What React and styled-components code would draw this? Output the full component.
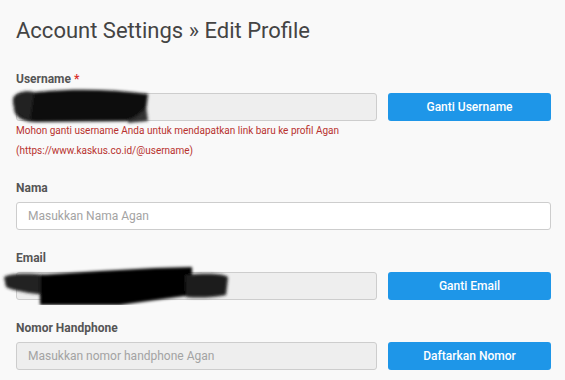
import React from 'react';
import styled, { createGlobalStyle } from 'styled-components';

const GlobalStyle = createGlobalStyle`
  html, body {
    margin: 0;
    padding: 0;
    background: #f9f9f9;
  }
  body {
    font-family: Roboto, "Liberation Sans", Arial, sans-serif;
  }
`;

const Page = styled.div`
  position: relative;
  width: 565px;
  height: 380px;
  overflow: hidden;
  box-sizing: border-box;
  padding: 16px 14px 0 16px;
  background: #f9f9f9;
`;

const Title = styled.h1`
  margin: 0 0 25px;
  font-size: 22px;
  line-height: 30px;
  font-weight: 400;
  color: #444;
`;

const Group = styled.div`
  margin-bottom: ${(p) => (p.$tight ? 19 : 20)}px;
`;

const Label = styled.label`
  display: block;
  font-size: 12px;
  line-height: 16px;
  font-weight: 700;
  color: #555;
  margin-bottom: 6px;
`;

const Required = styled.span`
  color: #d9302c;
  margin-left: 3px;
`;

const Row = styled.div`
  display: grid;
  grid-template-columns: ${(p) => (p.$withButton ? '1fr 163px' : '1fr')};
  column-gap: 11px;
`;

const Input = styled.input`
  box-sizing: border-box;
  width: 100%;
  height: 28px;
  margin: 0;
  padding: 0 11px;
  border: 1px solid #cdcdcd;
  border-radius: 3px;
  background: ${(p) => (p.disabled ? '#eeeeee' : '#ffffff')};
  font-family: inherit;
  font-size: 12px;
  color: #444;
  outline: none;
  &::placeholder {
    color: #a3a3a3;
  }
`;

const Button = styled.button`
  height: 28px;
  margin: 0;
  border: none;
  border-radius: 3px;
  background: #1e96e8;
  color: #fff;
  font-family: inherit;
  font-size: 12px;
  font-weight: 500;
  cursor: pointer;
`;

const Helper = styled.p`
  margin: 0;
  font-size: 10px;
  line-height: 20px;
  color: #b8322e;
`;

const Scribble = styled.svg`
  position: absolute;
  pointer-events: none;
`;

const UsernameScribble = () => (
  <Scribble width="160" height="50" viewBox="0 0 160 50" style={{ left: 0, top: 80 }}>
    <defs>
      <filter id="b1" x="-20%" y="-40%" width="140%" height="180%">
        <feGaussianBlur stdDeviation="1.6" />
      </filter>
    </defs>
    <g filter="url(#b1)">
      <path d="M16 16 C40 9 100 7 148 14 L146 30 C140 38 132 40 128 41 L36 42 C24 42 16 38 14 30 Z" fill="#111" />
      <path d="M13 18 C16 12 26 10 34 12 L30 40 C20 38 12 32 13 18 Z" fill="#222" />
      <path d="M128 40 C136 38 144 32 146 26 L148 41 L128 43 Z" fill="#333" />
    </g>
  </Scribble>
);

const EmailScribble = () => (
  <Scribble width="250" height="50" viewBox="0 0 250 50" style={{ left: 0, top: 255 }}>
    <defs>
      <filter id="b2" x="-10%" y="-40%" width="120%" height="180%">
        <feGaussianBlur stdDeviation="1.8" />
      </filter>
    </defs>
    <g filter="url(#b2)">
      <path d="M4 22 C10 18 30 18 46 20 L46 40 C30 38 14 36 6 32 Z" fill="#222" />
      <path d="M40 20 L100 16 L155 13 L192 12 L192 40 L120 50 L40 50 Z" fill="#000" />
      <path d="M185 20 C205 18 222 18 228 22 L226 40 C210 43 198 43 186 42 Z" fill="#1a1a1a" />
    </g>
  </Scribble>
);

export default function App() {
  return (
    <>
      <GlobalStyle />
      <Page>
        <Title>Account Settings » Edit Profile</Title>

        <Group $tight>
          <Label>
            Username<Required>*</Required>
          </Label>
          <Row $withButton>
            <Input disabled />
            <Button type="button">Ganti Username</Button>
          </Row>
          <Helper>
            Mohon ganti username Anda untuk mendapatkan link baru ke profil Agan
            <br />
            (https://www.kaskus.co.id/@username)
          </Helper>
        </Group>

        <Group>
          <Label>Nama</Label>
          <Row>
            <Input placeholder="Masukkan Nama Agan" />
          </Row>
        </Group>

        <Group>
          <Label>Email</Label>
          <Row $withButton>
            <Input disabled />
            <Button type="button">Ganti Email</Button>
          </Row>
        </Group>

        <Group>
          <Label>Nomor Handphone</Label>
          <Row $withButton>
            <Input disabled placeholder="Masukkan nomor handphone Agan" />
            <Button type="button">Daftarkan Nomor</Button>
          </Row>
        </Group>

        <UsernameScribble />
        <EmailScribble />
      </Page>
    </>
  );
}
